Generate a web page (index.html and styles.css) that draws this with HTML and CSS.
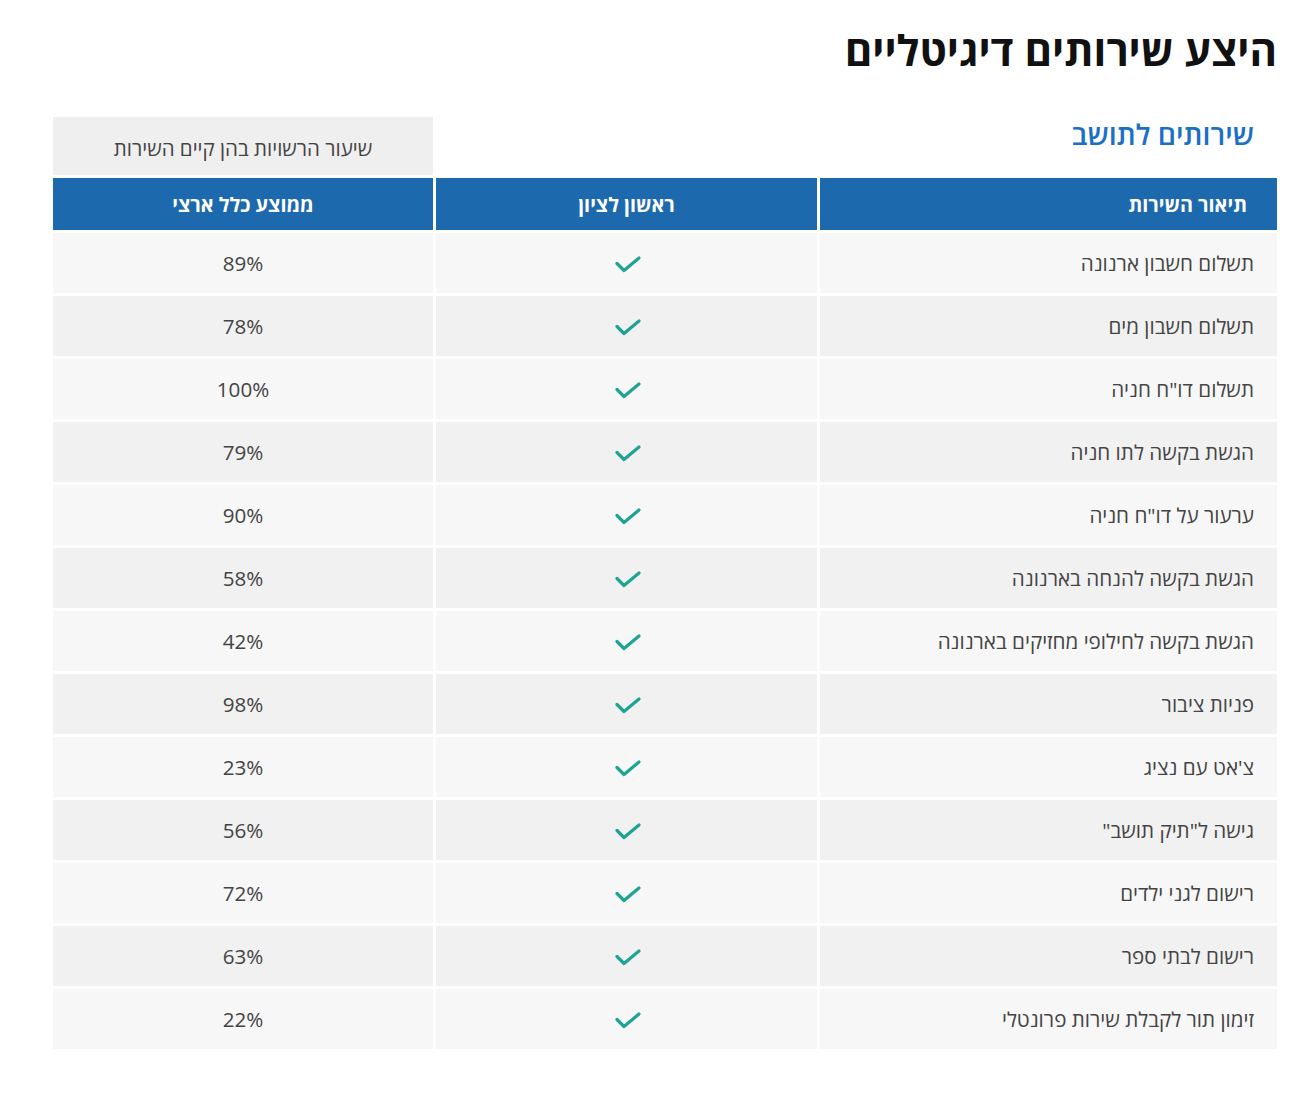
FILE: index.html
```html
<!DOCTYPE html>
<html lang="he" dir="rtl">
<head>
<meta charset="utf-8">
<title>היצע שירותים דיגיטליים</title>
<link rel="stylesheet" href="styles.css">
</head>
<body>
<main class="page">
  <h1 class="title">היצע שירותים דיגיטליים</h1>
  <div class="grid">
    <div class="caption">שירותים לתושב</div>
    <div class="spacer"></div>
    <div class="rate-box">שיעור הרשויות בהן קיים השירות</div>

    <div class="head head-desc">תיאור השירות</div>
    <div class="head">ראשון לציון</div>
    <div class="head">ממוצע כלל ארצי</div>

    <div class="cell desc odd">תשלום חשבון ארנונה</div>
    <div class="cell odd"><svg class="check" viewBox="0 0 26 18"><path d="M2 7.5 L9 14.5 L24 2"/></svg></div>
    <div class="cell odd">89%</div>

    <div class="cell desc even">תשלום חשבון מים</div>
    <div class="cell even"><svg class="check" viewBox="0 0 26 18"><path d="M2 7.5 L9 14.5 L24 2"/></svg></div>
    <div class="cell even">78%</div>

    <div class="cell desc odd">תשלום דו"ח חניה</div>
    <div class="cell odd"><svg class="check" viewBox="0 0 26 18"><path d="M2 7.5 L9 14.5 L24 2"/></svg></div>
    <div class="cell odd">100%</div>

    <div class="cell desc even">הגשת בקשה לתו חניה</div>
    <div class="cell even"><svg class="check" viewBox="0 0 26 18"><path d="M2 7.5 L9 14.5 L24 2"/></svg></div>
    <div class="cell even">79%</div>

    <div class="cell desc odd">ערעור על דו"ח חניה</div>
    <div class="cell odd"><svg class="check" viewBox="0 0 26 18"><path d="M2 7.5 L9 14.5 L24 2"/></svg></div>
    <div class="cell odd">90%</div>

    <div class="cell desc even">הגשת בקשה להנחה בארנונה</div>
    <div class="cell even"><svg class="check" viewBox="0 0 26 18"><path d="M2 7.5 L9 14.5 L24 2"/></svg></div>
    <div class="cell even">58%</div>

    <div class="cell desc odd">הגשת בקשה לחילופי מחזיקים בארנונה</div>
    <div class="cell odd"><svg class="check" viewBox="0 0 26 18"><path d="M2 7.5 L9 14.5 L24 2"/></svg></div>
    <div class="cell odd">42%</div>

    <div class="cell desc even">פניות ציבור</div>
    <div class="cell even"><svg class="check" viewBox="0 0 26 18"><path d="M2 7.5 L9 14.5 L24 2"/></svg></div>
    <div class="cell even">98%</div>

    <div class="cell desc odd">צ'אט עם נציג</div>
    <div class="cell odd"><svg class="check" viewBox="0 0 26 18"><path d="M2 7.5 L9 14.5 L24 2"/></svg></div>
    <div class="cell odd">23%</div>

    <div class="cell desc even">גישה ל"תיק תושב"</div>
    <div class="cell even"><svg class="check" viewBox="0 0 26 18"><path d="M2 7.5 L9 14.5 L24 2"/></svg></div>
    <div class="cell even">56%</div>

    <div class="cell desc odd">רישום לגני ילדים</div>
    <div class="cell odd"><svg class="check" viewBox="0 0 26 18"><path d="M2 7.5 L9 14.5 L24 2"/></svg></div>
    <div class="cell odd">72%</div>

    <div class="cell desc even">רישום לבתי ספר</div>
    <div class="cell even"><svg class="check" viewBox="0 0 26 18"><path d="M2 7.5 L9 14.5 L24 2"/></svg></div>
    <div class="cell even">63%</div>

    <div class="cell desc odd">זימון תור לקבלת שירות פרונטלי</div>
    <div class="cell odd"><svg class="check" viewBox="0 0 26 18"><path d="M2 7.5 L9 14.5 L24 2"/></svg></div>
    <div class="cell odd">22%</div>
  </div>
</main>
</body>
</html>
```

FILE: styles.css
```css
html, body {
  margin: 0;
  padding: 0;
  background: #ffffff;
}

body {
  font-family: "Open Sans", "Noto Sans", "DejaVu Sans", sans-serif;
  color: #444444;
}

.page {
  padding: 24px 23px 40px 53px;
}

.title {
  margin: 0;
  height: 93px;
  font-size: 42px;
  line-height: 52px;
  font-weight: 700;
  color: #111111;
  text-align: right;
}

.grid {
  display: grid;
  grid-template-columns: 457px 381px 380px;
  grid-template-rows: 58px 52px repeat(13, 60px);
  gap: 3px;
}

.caption {
  display: flex;
  align-items: center;
  padding-right: 23px;
  padding-bottom: 24px;
  font-size: 28.5px;
  font-weight: 600;
  color: #1a70c4;
}

.rate-box {
  background: #efefef;
  display: flex;
  align-items: center;
  justify-content: center;
  padding-top: 4px;
  font-size: 20.5px;
  color: #444444;
}

.head {
  background: #1d69ad;
  color: #ffffff;
  font-size: 19.8px;
  font-weight: 700;
  display: flex;
  align-items: center;
  justify-content: center;
}

.head-desc {
  justify-content: flex-start;
  padding-right: 30px;
}

.cell {
  display: flex;
  align-items: center;
  justify-content: center;
  font-size: 20.6px;
  color: #444444;
}

.desc {
  justify-content: flex-start;
  padding-right: 23px;
}

.odd {
  background: #f7f7f7;
}

.even {
  background: #f1f1f1;
}

.check {
  width: 26px;
  height: 18px;
  fill: none;
  stroke: #1fa393;
  stroke-width: 3.2;
  stroke-linecap: round;
  stroke-linejoin: round;
  margin-left: 2px;
  margin-top: 3px;
}
```
